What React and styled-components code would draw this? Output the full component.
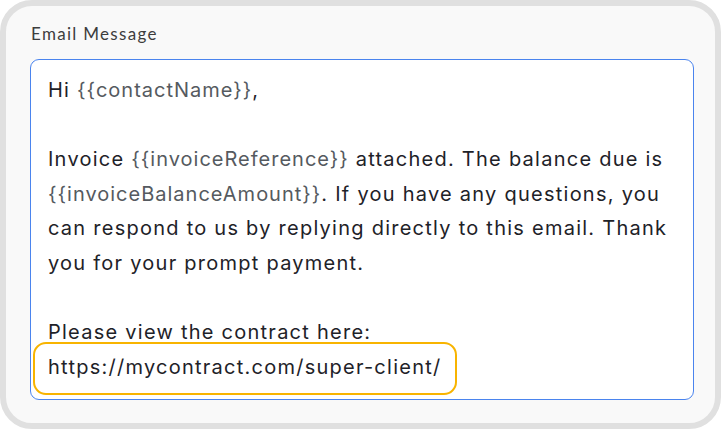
import React from "react";
import styled, { createGlobalStyle } from "styled-components";

const GlobalStyle = createGlobalStyle`
  html, body {
    margin: 0;
    padding: 0;
    background: #ffffff;
  }
`;

const Frame = styled.div`
  box-sizing: border-box;
  width: 721px;
  height: 429px;
  background: #f9f9f9;
  border: 6px solid #e0e0e0;
  border-radius: 32px;
  padding: 18px 21px 0 24px;
  display: flex;
  flex-direction: column;
`;

const Label = styled.label`
  font-family: "Lato", "Inter", sans-serif;
  font-size: 17px;
  line-height: 20px;
  letter-spacing: 1.3px;
  color: #3d3d3d;
  margin: 0 0 15px 1px;
`;

const MessageBox = styled.div`
  position: relative;
  box-sizing: border-box;
  height: 341px;
  background: #ffffff;
  border: 1px solid #4a84ee;
  border-radius: 9px;
  padding: 13px 17px 0 17px;
  font-family: "Inter", sans-serif;
  font-size: 20px;
  line-height: 34.6px;
  letter-spacing: 1.25px;
  color: #1e2228;
`;

const Para = styled.p`
  margin: 0 0 34.6px 0;
  &:last-child {
    margin-bottom: 0;
  }
`;

const Var = styled.span`
  color: #555a60;
  letter-spacing: 1px;
`;

const Highlight = styled.div`
  position: absolute;
  left: 2px;
  top: 282px;
  width: 424px;
  height: 53px;
  box-sizing: border-box;
  border: 2.5px solid #f8b400;
  border-radius: 13px;
  pointer-events: none;
`;

export default function App() {
  return (
    <>
      <GlobalStyle />
      <Frame>
        <Label>Email Message</Label>
        <MessageBox>
          <Para>
            Hi <Var>{"{{contactName}}"}</Var>,
          </Para>
          <Para>
            Invoice <Var>{"{{invoiceReference}}"}</Var> attached. The balance due is{" "}
            <Var>{"{{invoiceBalanceAmount}}"}</Var>. If you have any questions, you can
            respond to us by replying directly to this email. Thank you for your prompt
            payment.
          </Para>
          <Para>
            Please view the contract here:
            <br />
            https://mycontract.com/super-client/
          </Para>
          <Highlight />
        </MessageBox>
      </Frame>
    </>
  );
}
